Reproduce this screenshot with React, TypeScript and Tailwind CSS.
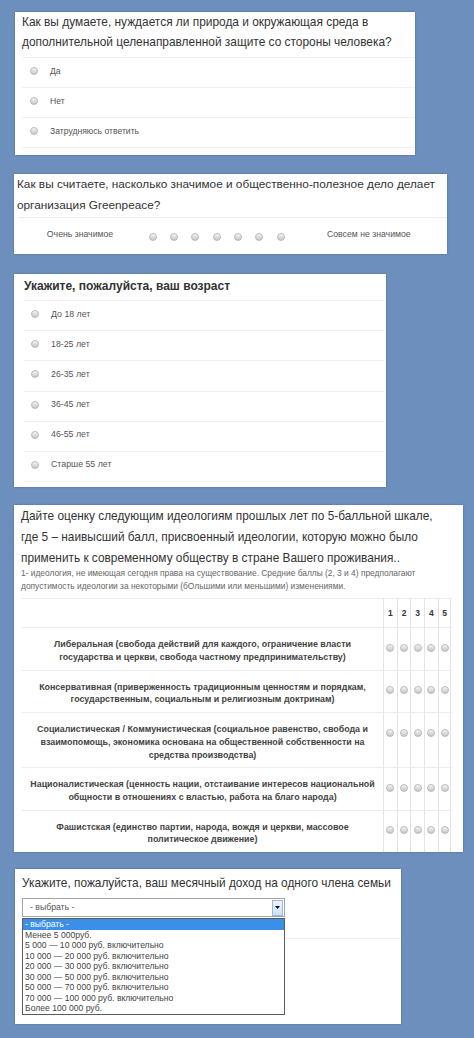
import React from 'react'

const sans = { fontFamily: '"Liberation Sans", Arial, sans-serif' }

function Radio() {
  return (
    <span className="inline-block w-[8px] h-[8px] shrink-0 rounded-full border border-[#b9b9b9] bg-linear-to-b from-[#f6f6f6] to-[#c6c6c6]" />
  )
}

const ideologies = [
  [
    'Либеральная (свобода действий для каждого, ограничение власти',
    'государства и церкви, свобода частному предпринимательству)',
  ],
  [
    'Консервативная (приверженность традиционным ценностям и порядкам,',
    'государственным, социальным и религиозным доктринам)',
  ],
  [
    'Социалистическая / Коммунистическая (социальное равенство, свобода и',
    'взаимопомощь, экономика основана на общественной собственности на',
    'средства производства)',
  ],
  [
    'Националистическая (ценность нации, отстаивание интересов национальной',
    'общности в отношениях с властью, работа на благо народа)',
  ],
  [
    'Фашистская (единство партии, народа, вождя и церкви, массовое',
    'политическое движение)',
  ],
]

const ages = ['До 18 лет', '18-25 лет', '26-35 лет', '36-45 лет', '46-55 лет', 'Старше 55 лет']

const incomes = [
  '- выбрать -',
  'Менее 5 000руб.',
  '5 000 — 10 000 руб. включительно',
  '10 000 — 20 000 руб. включительно',
  '20 000 — 30 000 руб. включительно',
  '30 000 — 50 000 руб. включительно',
  '50 000 — 70 000 руб. включительно',
  '70 000 — 100 000 руб. включительно',
  'Более 100 000 руб.',
]

export default function App() {
  return (
    <div className="min-h-screen bg-[#6c8fbe] pl-[14px] pt-[12px] pb-[12px]" style={sans}>
      {/* вопрос 1 */}
      <div className="ml-[1px] w-[400px] bg-white shadow-[0_0_2px_rgba(0,0,0,0.25)] pb-[7px]">
        <div className="pl-[7px] pb-[5px] text-[11.9px] leading-[20px] text-[#333]">
          <div className="whitespace-nowrap">Как вы думаете, нуждается ли природа и окружающая среда в</div>
          <div className="whitespace-nowrap">дополнительной целенаправленной защите со стороны человека?</div>
        </div>
        <div className="ml-[7px] border-b border-[#f0f0f0]">
          {['Да', 'Нет', 'Затрудняюсь ответить'].map((t) => (
            <div key={t} className="flex h-[30px] items-center border-t border-[#f0f0f0] pb-[3px] pl-[8px]">
              <Radio />
              <span className="ml-[12px] text-[8.6px] text-[#555]">{t}</span>
            </div>
          ))}
        </div>
      </div>

      {/* вопрос 2 */}
      <div className="mt-[19px] w-[433px] bg-white shadow-[0_0_2px_rgba(0,0,0,0.25)]">
        <div className="pl-[3px] pb-[1px] text-[11.8px] leading-[21px] text-[#333]">
          <div className="whitespace-nowrap">Как вы считаете, насколько значимое и общественно-полезное дело делает</div>
          <div>организация Greenpeace?</div>
        </div>
        <div className="ml-[4px] flex h-[37px] items-center border-t border-[#ececec] pb-[3px] text-[8.7px] text-[#555]">
          <div className="w-[124px] text-center">Очень значимое</div>
          {[0, 1, 2, 3, 4, 5, 6].map((i) => (
            <div key={i} className="flex w-[21.33px] justify-center pt-[5px]">
              <Radio />
            </div>
          ))}
          <div className="w-[155px] text-center">Совсем не значимое</div>
        </div>
      </div>

      {/* вопрос 3 */}
      <div className="mt-[20px] w-[372px] bg-white shadow-[0_0_2px_rgba(0,0,0,0.25)] pb-[5px]">
        <div className="pl-[10px] pt-[2px] pb-[4px] text-[12px] font-bold leading-[20px] text-[#333]">
          Укажите, пожалуйста, ваш возраст
        </div>
        <div className="ml-[10px] mr-[2px] border-b border-[#f0f0f0]">
          {ages.map((t) => (
            <div key={t} className="flex h-[30.2px] items-center border-t border-[#f0f0f0] pb-[3px] pl-[7px]">
              <Radio />
              <span className="ml-[12px] text-[8.8px] text-[#555]">{t}</span>
            </div>
          ))}
        </div>
      </div>

      {/* вопрос 4 */}
      <div className="mt-[18px] w-[449px] bg-white shadow-[0_0_2px_rgba(0,0,0,0.25)]">
        <div className="pl-[7px] pt-[1px] text-[11.85px] leading-[21px] text-[#333]">
          <div className="whitespace-nowrap">Дайте оценку следующим идеологиям прошлых лет по 5-балльной шкале,</div>
          <div className="whitespace-nowrap">где 5 – наивысший балл, присвоенный идеологии, которую можно было</div>
          <div className="whitespace-nowrap">применить к современному обществу в стране Вашего проживания..</div>
        </div>
        <div className="-mt-[2px] pl-[7px] pb-[6px] text-[8.4px] leading-[12.6px] text-[#666]">
          <div className="whitespace-nowrap">1- идеология, не имеющая сегодня права на существование. Средние баллы (2, 3 и 4) предполагают</div>
          <div className="whitespace-nowrap">допустимость идеологии за некоторыми (бОльшими или меньшими) изменениями.</div>
        </div>
        <div className="ml-[8px] w-[430px]">
          <div className="flex h-[30px] border-t border-b border-[#ececec]">
            <div className="w-[361px]" />
            {[1, 2, 3, 4, 5].map((n) => (
              <div
                key={n}
                className={`flex w-[13.7px] items-center justify-center border-l border-[#e3e3e3] text-[8.5px] font-bold text-[#333] ${n === 5 ? 'border-r' : ''}`}
              >
                {n}
              </div>
            ))}
          </div>
          {ideologies.map((lines, i) => (
            <div key={i} className={`flex ${i < ideologies.length - 1 ? 'border-b border-[#ececec]' : ''}`}>
              <div className="w-[361px] pt-[10px] pb-[6px] text-center text-[8.9px] font-bold leading-[12.7px] text-[#444]">
                {lines.map((l) => (
                  <div key={l} className="whitespace-nowrap">{l}</div>
                ))}
              </div>
              {[1, 2, 3, 4, 5].map((n) => (
                <div
                  key={n}
                  className={`flex w-[13.7px] justify-center border-l border-[#e3e3e3] pt-[15.5px] ${n === 5 ? 'border-r' : ''}`}
                >
                  <Radio />
                </div>
              ))}
            </div>
          ))}
        </div>
      </div>

      {/* вопрос 5 */}
      <div className="mt-[17px] ml-[1px] w-[386px] bg-white shadow-[0_0_2px_rgba(0,0,0,0.25)]">
        <div className="pl-[7px] pt-[4px] text-[11.85px] leading-[20px] text-[#333] whitespace-nowrap">
          Укажите, пожалуйста, ваш месячный доход на одного члена семьи
        </div>
        <div className="relative ml-[7px] mt-[5px] w-[263px]">
          <div className="flex h-[19px] items-center border border-[#a5a5a5] bg-white">
            <span className="flex-1 pl-[7px] text-[8.7px] text-[#555]">- выбрать -</span>
            <span className="mr-px flex h-[16px] w-[11px] items-center justify-center border border-[#9cb8da] bg-linear-to-b from-[#eef5fd] to-[#cfe0f4]">
              <svg width="5" height="3" viewBox="0 0 5 3">
                <path d="M0 0h5L2.5 3z" fill="#111" />
              </svg>
            </span>
          </div>
          <div className="absolute left-0 top-[20px] z-10 w-[263px] border border-[#5c5c5c] bg-white">
            {incomes.map((t, i) => (
              <div
                key={t}
                className={`h-[10.5px] whitespace-nowrap pl-[2px] text-[8.6px] leading-[10.5px] ${i === 0 ? 'bg-[#3b8fe8] text-white' : 'text-[#444]'}`}
              >
                {t}
              </div>
            ))}
          </div>
        </div>
        <div className="ml-[7px] mt-[21px] h-[86px] border-t border-[#f0f0f0]" />
      </div>
    </div>
  )
}
